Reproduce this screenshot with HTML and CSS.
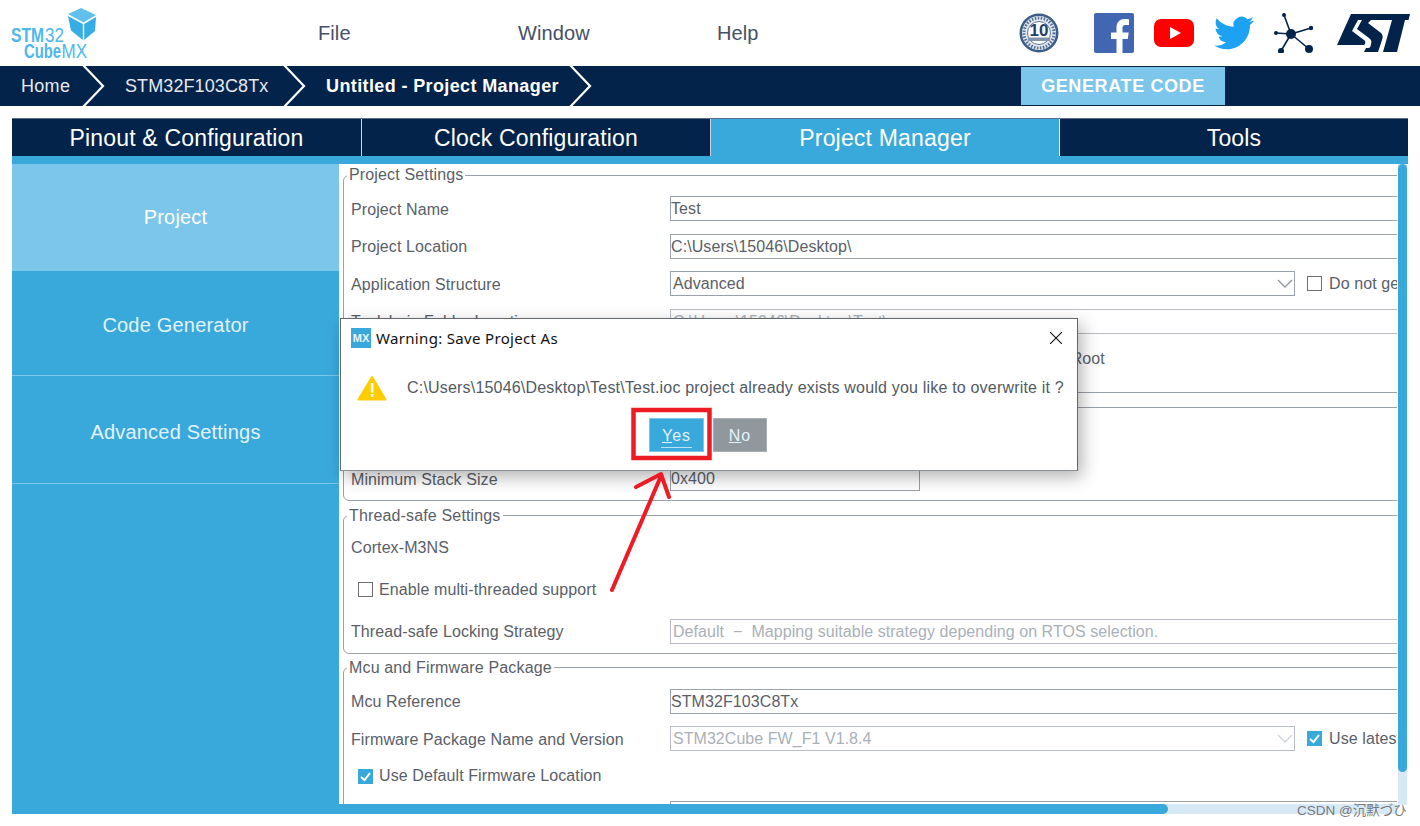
FILE: index.html
```html
<!DOCTYPE html>
<html lang="en">
<head>
<meta charset="utf-8">
<title>STM32CubeMX - Project Manager</title>
<link rel="stylesheet" href="styles.css">
</head>
<body>
<div class="app">
  <header class="topbar">
    <svg class="logo" viewBox="0 0 100 60" width="100" height="60" aria-label="STM32 CubeMX">
      <polygon class="cube-top" points="68,14 81,8 96,15 83.500,22.500"/>
      <polygon class="cube-side" points="68,16 82.800,24 82.800,40 71,30.500"/>
      <polygon class="cube-side" points="84.200,24 96,17 95,31 84.200,40"/>
      <text class="logo-text logo-b" x="11" y="41.500" textLength="33" lengthAdjust="spacingAndGlyphs">STM</text>
      <text class="logo-text" x="45" y="41.500" textLength="19" lengthAdjust="spacingAndGlyphs">32</text>
      <text class="logo-text logo-b" x="24" y="58" textLength="37" lengthAdjust="spacingAndGlyphs">Cube</text>
      <text class="logo-text" x="61.500" y="58" textLength="25.500" lengthAdjust="spacingAndGlyphs">MX</text>
    </svg>
    <nav class="menu">
      <span class="menu-item">File</span>
      <span class="menu-item">Window</span>
      <span class="menu-item">Help</span>
    </nav>
    <div class="social">
      <svg class="badge" width="42" height="42" viewBox="0 0 42 42" aria-label="10 years">
        <circle cx="21" cy="21" r="19.500" fill="#3d5c86"/>
        <circle cx="21" cy="21" r="17" fill="#e4e9ef"/>
        <circle cx="21" cy="21" r="15" fill="none" stroke="#4f6d95" stroke-width="3" stroke-dasharray="1.500 1.500"/>
        <circle cx="21" cy="21" r="11.500" fill="#fff" stroke="#5c789c" stroke-width="1"/>
        <text class="badge-num" x="21" y="24" text-anchor="middle">10</text>
        <rect x="10" y="25.500" width="22" height="3.500" fill="#7f93ad"/>
      </svg>
      <svg width="40" height="40" viewBox="0 0 40 40" aria-label="Facebook">
        <rect width="40" height="40" rx="2" fill="#4267b2"/>
        <path fill="#fff" d="M22.500 40V26H17v-6.500h5.500v-5C22.500 9 26 6 30.500 6c2 0 4 .2 4.500.3V12h-3c-3 0-3.500 1.500-3.500 3.500v4h6.200L33.800 26h-5.300v14z"/>
      </svg>
      <svg width="40" height="28" viewBox="0 0 40 28" aria-label="YouTube">
        <rect width="40" height="28" rx="7" fill="#f00"/>
        <polygon points="16,8 16,20 27,14" fill="#fff"/>
      </svg>
      <svg width="40" height="40" viewBox="0 0 24 24" aria-label="Twitter">
        <path fill="#1da1f2" d="M23.953 4.570a10 10 0 01-2.825.775 4.958 4.958 0 002.163-2.723c-.951.555-2.005.959-3.127 1.184a4.920 4.920 0 00-8.384 4.482C7.690 8.095 4.067 6.130 1.640 3.162a4.822 4.822 0 00-.666 2.475c0 1.710.870 3.213 2.188 4.096a4.904 4.904 0 01-2.228-.616v.060a4.923 4.923 0 003.946 4.827 4.996 4.996 0 01-2.212.085 4.936 4.936 0 004.604 3.417 9.867 9.867 0 01-6.102 2.105c-.390 0-.779-.023-1.170-.067a13.995 13.995 0 007.557 2.209c9.053 0 13.998-7.496 13.998-13.985 0-.210 0-.420-.015-.630A9.935 9.935 0 0024 4.590z"/>
      </svg>
      <svg width="40" height="40" viewBox="0 0 40 40" aria-label="Community">
        <g stroke="#03234b" stroke-width="1.600"><line x1="17" y1="21" x2="10" y2="2"/><line x1="17" y1="21" x2="37" y2="15"/><line x1="17" y1="21" x2="35" y2="36"/><line x1="17" y1="21" x2="7" y2="38"/><line x1="17" y1="21" x2="2" y2="20"/></g>
        <g fill="#03234b"><circle cx="17" cy="21" r="5"/><circle cx="10" cy="2" r="2"/><circle cx="37" cy="15" r="2.200"/><circle cx="35" cy="36" r="4"/><circle cx="7" cy="38" r="3"/><circle cx="2" cy="20" r="2"/></g>
      </svg>
      <svg class="st" width="73" height="40" viewBox="0 0 73 40" aria-label="ST">
        <g fill="#03234b">
          <path d="M14 1H73L71.500 7H21L15 18L27 27C29 28.500 28.500 31 27 32H0Z"/>
          <path d="M25 7H34L31 10L44 20C46 22 46 24 45 27L41 39H27L29 35H31C33 35 33.500 34 34 31C35 28 34 26.500 32 25L20 16Z"/>
          <path d="M55 7H68L60 39H46Z"/>
        </g>
      </svg>
    </div>
  </header>

  <div class="crumbbar">
    <span class="crumb crumb-home">Home</span>
    <svg class="chev" width="24" height="40" viewBox="0 0 24 40"><polyline points="1,-1 21,20 1,41"/></svg>
    <span class="crumb crumb-mcu">STM32F103C8Tx</span>
    <svg class="chev" width="24" height="40" viewBox="0 0 24 40"><polyline points="1,-1 21,20 1,41"/></svg>
    <span class="crumb crumb-now">Untitled - Project Manager</span>
    <svg class="chev" width="24" height="40" viewBox="0 0 24 40"><polyline points="1,-1 21,20 1,41"/></svg>
    <button class="generate">GENERATE CODE</button>
  </div>

  <div class="workspace">
    <div class="tabs">
      <div class="tab">Pinout &amp; Configuration</div>
      <div class="tab">Clock Configuration</div>
      <div class="tab tab-active">Project Manager</div>
      <div class="tab">Tools</div>
    </div>
    <div class="strip"></div>
    <div class="panel">
      <aside class="side">
        <div class="side-item side-active">Project</div>
        <div class="side-item side-code">Code Generator</div>
        <div class="side-item side-adv">Advanced Settings</div>
      </aside>
      <div class="pane">
        <div class="scroll">
          <div class="sheet">
            <fieldset class="group group-project">
              <legend>Project Settings</legend>
              <div class="row"><span class="label">Project Name</span><div class="field">Test</div></div>
              <div class="row"><span class="label">Project Location</span><div class="field">C:\Users\15046\Desktop\</div></div>
              <div class="row"><span class="label">Application Structure</span><div class="field field-select">Advanced<svg class="caret" width="16" height="10" viewBox="0 0 16 10"><polyline points="1,1 8,8 15,1"/></svg></div><label class="check check-inline"><span class="box"></span>Do not generate the main()</label></div>
              <div class="row"><span class="label">Toolchain Folder Location</span><div class="field field-off">C:\Users\15046\Desktop\Test\</div></div>
              <div class="row"><span class="label">Toolchain / IDE</span><div class="field field-ide">MDK-ARM</div><label class="check check-root"><span class="box"></span>Generate Under Root</label></div>
            </fieldset>
            <fieldset class="group group-linker">
              <legend>Linker Settings</legend>
              <div class="row"><span class="label">Minimum Heap Size</span><div class="field field-short">0x200</div></div>
              <div class="row"><span class="label">Minimum Stack Size</span><div class="field field-short">0x400</div></div>
            </fieldset>
            <fieldset class="group group-thread">
              <legend>Thread-safe Settings</legend>
              <div class="row row-tall"><span class="label">Cortex-M3NS</span></div>
              <div class="row row-tall"><label class="check check-line"><span class="box"></span>Enable multi-threaded support</label></div>
              <div class="row row-tall"><span class="label">Thread-safe Locking Strategy</span><div class="field field-off field-pad">Default &nbsp;−&nbsp; Mapping suitable strategy depending on RTOS selection.</div></div>
            </fieldset>
            <fieldset class="group group-mcu">
              <legend>Mcu and Firmware Package</legend>
              <div class="row"><span class="label">Mcu Reference</span><div class="field">STM32F103C8Tx</div></div>
              <div class="row"><span class="label">Firmware Package Name and Version</span><div class="field field-select field-off">STM32Cube FW_F1 V1.8.4<svg class="caret caret-off" width="16" height="10" viewBox="0 0 16 10"><polyline points="1,1 8,8 15,1"/></svg></div><label class="check check-inline"><span class="box box-on"><svg width="15" height="15" viewBox="0 0 15 15"><polyline points="3,8 6.500,11 12,4"/></svg></span>Use latest available version</label></div>
              <div class="row"><label class="check check-line"><span class="box box-on"><svg width="15" height="15" viewBox="0 0 15 15"><polyline points="3,8 6.500,11 12,4"/></svg></span>Use Default Firmware Location</label></div>
              <div class="row"><span class="label">Firmware Relative Path</span><div class="field"></div></div>
            </fieldset>
          </div>
        </div>
        <div class="vbar"><div class="vthumb"></div></div>
        <div class="hbar"><div class="hthumb"></div></div>
      </div>
    </div>
  </div>

  <div class="dialog">
    <div class="dialog-title">
      <span class="mx">MX</span>
      <span class="dialog-name">Warning: Save Project As</span>
      <svg class="close" width="12" height="12" viewBox="0 0 12 12"><path d="M0 0L12 12M12 0L0 12"/></svg>
    </div>
    <div class="dialog-msg">
      <svg width="30" height="26" viewBox="0 0 30 26"><path fill="#fc0" stroke="#fc0" stroke-width="2" stroke-linejoin="round" d="M15 2L28.500 24.500H1.500Z"/><rect x="13.800" y="8" width="2.600" height="9.500" fill="#fff"/><rect x="13.800" y="19" width="2.600" height="2.800" fill="#fff"/></svg>
      <span>C:\Users\15046\Desktop\Test\Test.ioc project already exists would you like to overwrite it ?</span>
    </div>
    <div class="dialog-actions">
      <button class="btn btn-yes"><span class="focus"><u>Y</u>es</span></button>
      <button class="btn btn-no"><u>N</u>o</button>
    </div>
  </div>

  <svg class="markup" width="1420" height="826" viewBox="0 0 1420 826">
    <rect x="633.500" y="410" width="76" height="48" fill="none" stroke="#ed1c24" stroke-width="4.500"/>
    <path fill="none" stroke="#ed1c24" stroke-width="4" stroke-linecap="round" stroke-linejoin="round" d="M612 590L661 476M636 487L661 474L669 497"/>
  </svg>

  <div class="watermark">CSDN @沉默づひ</div>
</div>
</body>
</html>
```
FILE: styles.css
```css
* { box-sizing: border-box; }
html, body { margin: 0; height: 100%; background: #fff; }
body { overflow: hidden; font-family: "Liberation Sans", Arial, sans-serif; color: #5a6068; }

.app { position: relative; width: 1420px; height: 826px; overflow: hidden; }

/* header */
.topbar { display: flex; align-items: center; height: 66px; }
.logo { flex: none; align-self: flex-start; }
.cube-top { fill: #62c1ec; }
.cube-side { fill: #36ade5; }
.logo-text { font: 19.500px "Liberation Sans", sans-serif; fill: #4db8ea; }
.logo-b { font-weight: 700; }
.menu { display: grid; grid-template-columns: 200px 199px 100px; margin-left: 218px; width: 700px; flex: none; }
.menu-item { font-size: 20px; color: #454f68; letter-spacing: .1px; }
.social { display: flex; align-items: center; gap: 20px; margin-left: 1px; }
.badge { margin-right: 14px; margin-left: -1px; }
.badge-num { font: 700 17px "Liberation Sans", sans-serif; fill: #1f3f6e; }
.st { margin-left: 3px; }

/* breadcrumb */
.crumbbar { display: flex; align-items: center; height: 40px; background: #03234b; }
.crumb { flex: none; font-size: 18px; color: #e6e9ee; letter-spacing: .1px; white-space: nowrap; }
.crumb-home { margin-left: 21px; width: 61px; letter-spacing: .3px; }
.crumb-mcu { margin-left: 19px; width: 158px; }
.crumb-now { margin-left: 19px; width: 243px; font-weight: 700; color: #fff; letter-spacing: .38px; }
.chev { flex: none; }
.chev polyline { fill: none; stroke: #fff; stroke-width: 2.200; }
.generate { flex: none; margin-left: 428px; width: 204px; height: 38px; border: 0; padding: 0; background: #7bc6ea; color: #fff; font: 700 18px "Liberation Sans", sans-serif; letter-spacing: .62px; }

/* tabs */
.workspace { margin: 12px 12px 0; width: 1396px; }
.tabs { display: grid; grid-template-columns: repeat(4, 1fr); height: 38px; background: #03234b; border-top: 1px solid #5b6f88; }
.tab { display: flex; align-items: center; justify-content: center; padding-top: 2px; border-left: 1px solid #cfd6de; font-size: 23px; color: #fff; letter-spacing: .18px; }
.tab:first-child { border-left: 0; }
.tab-active { background: #39a9dc; }
.tab-active + .tab { border-left-color: #fff; }
.strip { height: 8px; background: #39a9dc; }

.panel { display: flex; height: 650px; }
.side { width: 327px; flex: none; background: #39a9dc; }
.side-item { display: flex; align-items: center; justify-content: center; border-bottom: 1px solid #7bc6ea; font-size: 20px; color: #e3f2fa; letter-spacing: .2px; }
.side-active { height: 107px; background: #7bc6ea; border-bottom: 0; color: #fff; }
.side-code { height: 105px; padding-top: 4px; }
.side-adv { height: 108px; padding-top: 6px; }

/* content */
.pane { display: grid; flex: 1; min-width: 0; grid-template-columns: 1fr 11px; grid-template-rows: 640px 10px; }
.scroll { overflow: hidden; min-width: 0; }
.sheet { width: 1400px; padding: 1px 0 0 4px; }
.vbar { grid-row: 1 / 3; grid-column: 2; padding: 0 1px 0 1px; background: linear-gradient(#d7e8f6, #d7e8f6) 1px 0 / 9px 100% no-repeat; height: 641px; }
.vthumb { height: 608px; border-radius: 5px; background: #39a9dc; }
.hbar { background: #d7e8f6; }
.hthumb { width: 829px; height: 10px; border-radius: 0 5px 5px 0; background: #39a9dc; }

/* groups */
.group { margin: 0; padding: 0 0 0 7px; min-width: 0; border: 1px solid #9aa1a8; border-radius: 6px; }
.group legend { margin-left: -4px; padding: 0 2px; font-size: 16px; line-height: 20px; color: #5a6068; letter-spacing: .15px; }
.group-project { padding-top: 5px; padding-bottom: 14px; }
.group-linker { margin-top: 5px; padding-top: 5px; padding-bottom: 2px; }
.group-thread { margin-top: 5px; padding-top: 1px; padding-bottom: 0; }
.group-mcu { margin-top: 4px; padding-top: 5px; }

.row { display: flex; align-items: center; height: 37.5px; }
.row-tall { height: 42px; }
.label { width: 319px; flex: none; padding-top: 2px; font-size: 16px; letter-spacing: .1px; color: #5a6068; }
.row-tall .label { padding-top: 0; }
.field { position: relative; flex: 1; height: 25px; padding-left: 0; border: 1px solid #9aa1a8; font-size: 16px; line-height: 24px; color: #5a6068; white-space: nowrap; letter-spacing: .08px; background: #fff; }
.field-off { padding-left: 2px; color: #aab0b7; border-color: #b8bdc3; letter-spacing: .05px; }
.field-pad { line-height: 23px; }
.field-select { flex: none; width: 625px; padding-left: 2px; }
.field-short { flex: none; width: 250px; }
.field-ide { flex: none; width: 238px; }
.caret { position: absolute; right: 1px; top: 7px; }
.caret polyline { fill: none; stroke: #8f969d; stroke-width: 1.300; }
.caret-off polyline { stroke: #cfd3d7; }

.check { display: inline-flex; align-items: center; gap: 7px; font-size: 16px; color: #5a6068; letter-spacing: .1px; white-space: nowrap; }
.check-inline { margin-left: 12px; }
.check-root { margin-left: 20px; }
.check-line { margin-left: 7px; gap: 6px; }
.box { width: 15px; height: 15px; flex: none; border: 1.500px solid #6f6f6f; background: #fff; }
.box-on { border: 0; background: #39a9dc; }
.box-on svg { display: block; }
.box-on polyline { fill: none; stroke: #fff; stroke-width: 2; }

/* dialog */
.dialog { position: absolute; left: 340px; top: 318px; width: 738px; height: 153px; background: #fff; border: 1px solid #62676c; border-bottom-color: #8a8f94; box-shadow: 4px 6px 16px rgba(0, 0, 0, .3); }
.dialog-title { display: flex; align-items: center; height: 37px; padding: 0 15px 0 10px; }
.mx { width: 20px; height: 20px; background: #39a9dc; color: #e8f5fc; font: 700 11px/20px "Liberation Sans", sans-serif; text-align: center; }
.dialog-name { margin-left: 5px; flex: 1; font: 15px "Noto Sans", sans-serif; color: #111; letter-spacing: .33px; }
.close path { fill: none; stroke: #111; stroke-width: 1.100; }
.dialog-msg { display: flex; align-items: center; height: 41px; margin-top: 11px; padding-left: 16px; font-size: 16px; color: #525a63; letter-spacing: .19px; white-space: nowrap; }
.dialog-msg span { margin-left: 20px; }
.dialog-actions { display: flex; gap: 9px; margin: 10px 0 0 308px; }
.btn { width: 55px; height: 34px; padding: 1px 0 0; border: 1px solid #7bc6ea; color: #e3f1f9; font: 16px "Liberation Sans", sans-serif; letter-spacing: 1px; }
.btn-yes { padding-top: 3px; background: #39a9dc; }
.btn-no { width: 54px; background: #90989e; border-color: #a8aeb3; }
.focus { display: inline-block; padding: 0 1px 1px; border-bottom: 1px solid #bfe3f5; line-height: 20px; }

.markup { position: absolute; left: 0; top: 0; pointer-events: none; }
.watermark { position: absolute; left: 1297px; top: 799px; font: 13.500px "Liberation Sans", "Noto Sans CJK SC", sans-serif; color: rgba(90, 90, 90, .8); white-space: nowrap; }
```
